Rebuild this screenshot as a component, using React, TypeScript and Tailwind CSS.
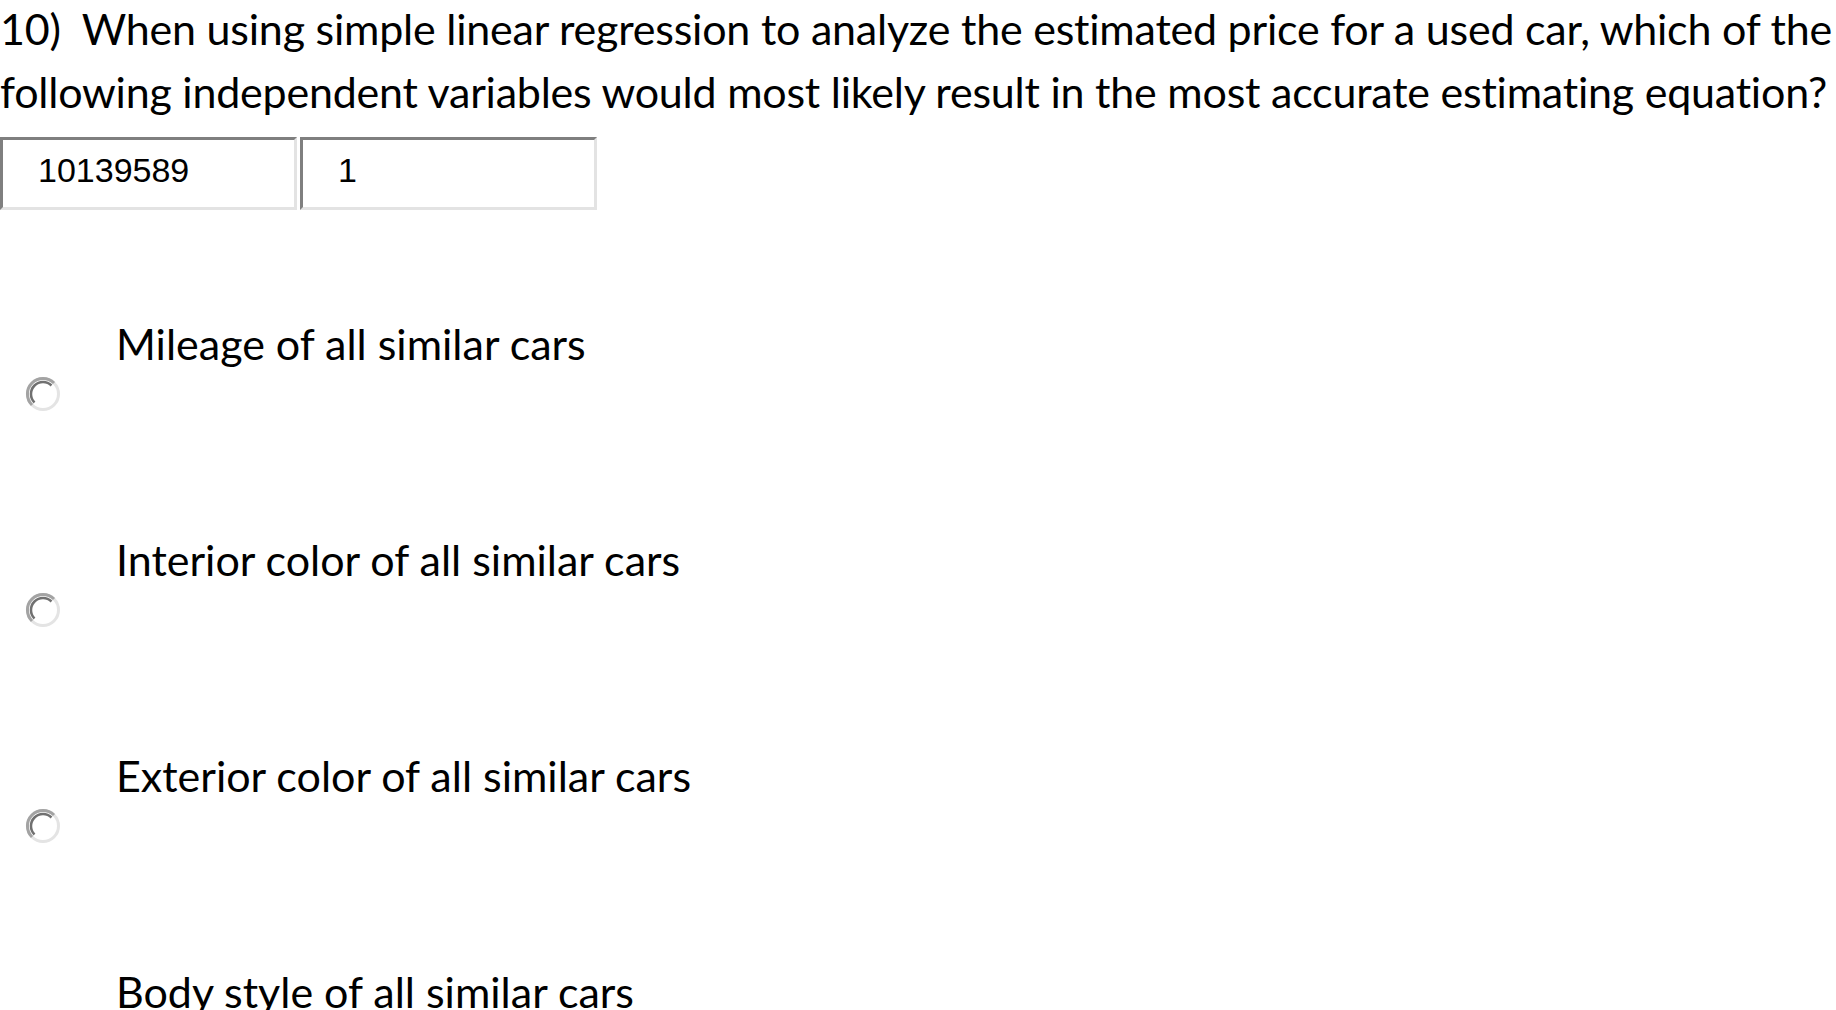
import React from "react";

const options = [
  "Mileage of all similar cars",
  "Interior color of all similar cars",
  "Exterior color of all similar cars",
  "Body style of all similar cars",
];

function Radio() {
  return (
    <svg width="36" height="36" viewBox="0 0 36 36" className="block">
      <circle cx="18" cy="18" r="15" fill="#ffffff" />
      <circle cx="18" cy="18" r="15.5" fill="none" stroke="#e4e4e4" strokeWidth="3" />
      {/* darker upper-left bevel */}
      <path d="M 7 29 A 15.5 15.5 0 0 1 29 7" fill="none" stroke="#a3a3a3" strokeWidth="3" />
      <path d="M 9.5 26.5 A 12 12 0 0 1 26.5 9.5" fill="none" stroke="#707070" strokeWidth="2.5" />
    </svg>
  );
}

function Field({ value }: { value: string }) {
  return (
    <div className="w-[297px] h-[73px] bg-white border-[3px] border-t-[#7f7f7f] border-l-[#7f7f7f] border-b-[#e3e3e3] border-r-[#e3e3e3] flex items-center pl-[35px] pb-[7px] font-['Liberation_Sans',Arial,sans-serif] text-[34px] text-black">
      {value}
    </div>
  );
}

export default function App() {
  return (
    <div className="w-[1836px] h-[1010px] overflow-hidden bg-white text-black font-['Lato','Noto_Sans',sans-serif]">
      <p className="text-[43px] leading-[63px] -mt-[3px] whitespace-nowrap tracking-[-0.22px]">
        10)&nbsp; When using simple linear regression to analyze the estimated price for a used car, which of the
        <br />
        following independent variables would most likely result in the most accurate estimating equation?
      </p>

      <div className="flex gap-[3px] mt-[14px]">
        <Field value="10139589" />
        <Field value="1" />
      </div>

      <div className="mt-[110px]">
        {options.map((o) => (
          <div key={o} className="h-[216px]">
            <div className="pl-[116px] text-[43px] leading-[48px] whitespace-nowrap">{o}</div>
            <div className="ml-[25px] mt-[8px]">
              <Radio />
            </div>
          </div>
        ))}
      </div>
    </div>
  );
}
